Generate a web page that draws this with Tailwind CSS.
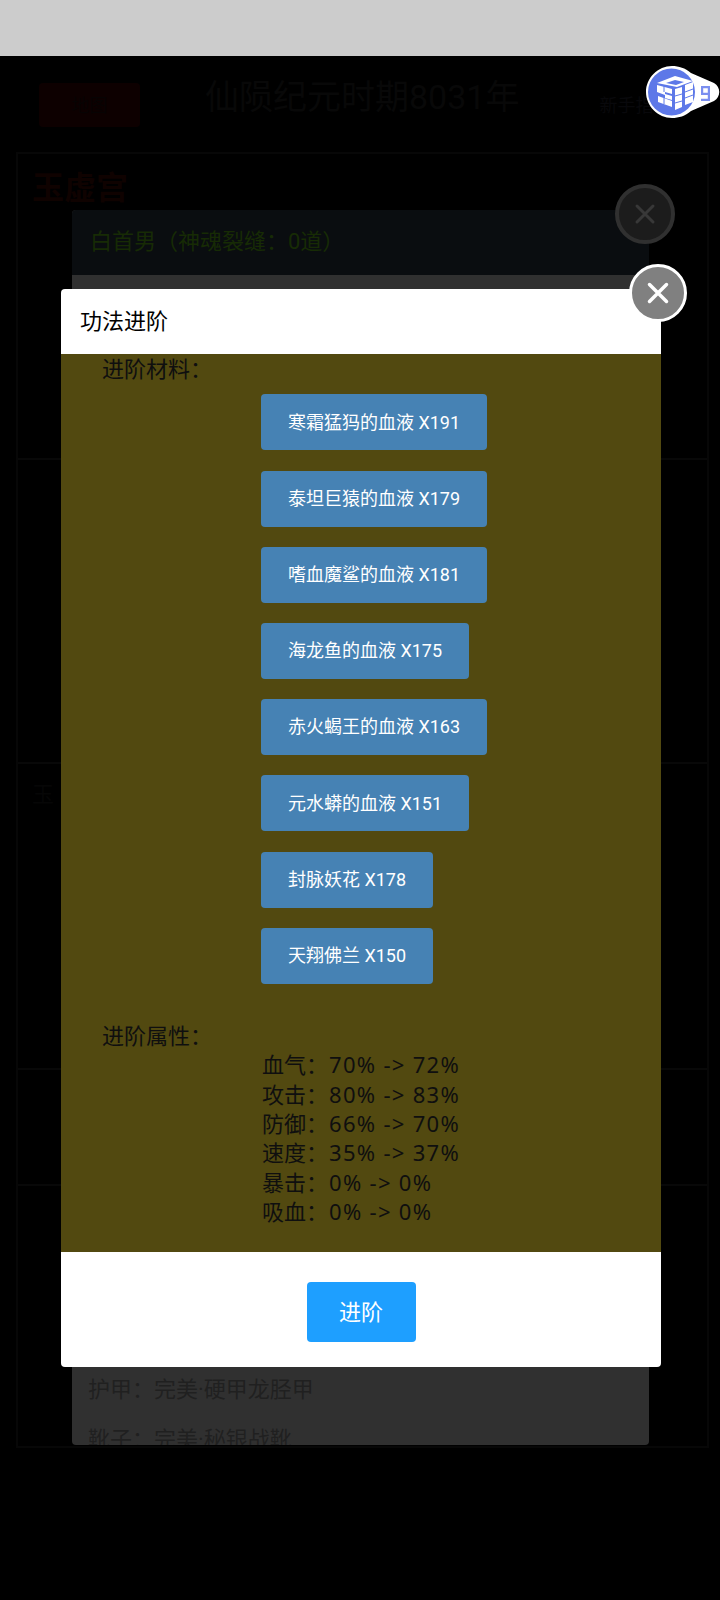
<!DOCTYPE html>
<html lang="zh-CN">
<head>
  <meta charset="UTF-8">
  <meta name="viewport" content="width=device-width, initial-scale=1.0">
  <title>功法进阶</title>
  <script src="https://cdn.jsdelivr.net/npm/@tailwindcss/browser@4"></script>
</head>
<body class="bg-black font-['Roboto','Noto_Sans_CJK_SC',sans-serif]">
  <div class="relative w-[720px] h-[1600px] overflow-hidden bg-black">
    <div class="h-[56px] bg-[#cccccc]"></div>

    <!-- page behind the dimmer -->
    <div class="flex h-[96px] items-start px-[39px]">
      <button class="mt-[27px] w-[101px] h-[44px] rounded-sm bg-[#0d0000] text-[18px] text-[#070303]">地图</button>
      <h1 class="ml-[65px] mt-[18px] text-[34px] leading-[46px] text-[#080808]">仙陨纪元时期8031年</h1>
      <span class="ml-[80px] mt-[38px] text-[18px] leading-[24px] text-[#08080b] whitespace-nowrap">新手指</span>
    </div>

    <div class="ml-[16px] w-[693px] flex flex-col border-2 border-[#070707] h-[1296px]">
      <div class="h-[306px] border-b-2 border-[#080808] px-[14px] pt-[12px]">
        <h2 class="text-[32px] leading-[44px] font-bold text-[#0f0200]">玉虚宫</h2>
      </div>
      <div class="h-[304px] border-b-2 border-[#080808]"></div>
      <div class="h-[306px] border-b-2 border-[#080808] px-[14px] pt-[14px]">
        <span class="text-[22px] text-[#060606]">玉</span>
      </div>
      <div class="h-[116px] border-b-2 border-[#080808]"></div>
      <div class="flex-1"></div>
    </div>

    <!-- first layer, dimmed -->
    <div class="absolute left-[72px] top-[210px] w-[577px] h-[1235px] rounded-sm overflow-hidden bg-[#303030]">
      <div class="h-[65px] bg-[#0a0d10] px-[18px] text-[22px] leading-[64px] text-[#172b05]">白首男（神魂裂缝：0道）</div>
      <div class="h-[1090px]"></div>
      <div class="px-[16px] text-[22px] leading-[30px] text-[#202020]">
        <p class="mt-[10px]">护甲：完美·硬甲龙胫甲</p>
        <p class="mt-[20px]">靴子：完美·秘银战靴</p>
      </div>
    </div>
    <button class="absolute left-[615px] top-[184px] w-[60px] h-[60px] rounded-full bg-[#1c1c1c] border-[4px] border-[#303030] flex items-center justify-center">
      <svg class="w-[30px] h-[30px]" viewBox="0 0 30 30"><path d="M7 7 23 23M23 7 7 23" stroke="#383838" stroke-width="3" stroke-linecap="round"/></svg>
    </button>

    <!-- current layer -->
    <div class="absolute left-[61px] top-[289px] w-[600px] h-[1078px] rounded-sm overflow-hidden bg-white flex flex-col">
      <div class="h-[65px] px-[19px] text-[22px] leading-[65px] text-black">功法进阶</div>
      <div class="h-[898px] bg-[#524910] pl-[41px] text-[22px] leading-[29.4px] text-[#0f0f0f]">
        <p class="pt-[1px]">进阶材料：</p>
        <div class="mt-[10px] ml-[159px] flex flex-col items-start gap-[20.2px]">
          <button class="h-[56px] px-[27px] rounded-[4px] bg-[#4682b4] text-[18px] text-white whitespace-nowrap">寒霜猛犸的血液 X191</button>
          <button class="h-[56px] px-[27px] rounded-[4px] bg-[#4682b4] text-[18px] text-white whitespace-nowrap">泰坦巨猿的血液 X179</button>
          <button class="h-[56px] px-[27px] rounded-[4px] bg-[#4682b4] text-[18px] text-white whitespace-nowrap">嗜血魔鲨的血液 X181</button>
          <button class="h-[56px] px-[27px] rounded-[4px] bg-[#4682b4] text-[18px] text-white whitespace-nowrap">海龙鱼的血液 X175</button>
          <button class="h-[56px] px-[27px] rounded-[4px] bg-[#4682b4] text-[18px] text-white whitespace-nowrap">赤火蝎王的血液 X163</button>
          <button class="h-[56px] px-[27px] rounded-[4px] bg-[#4682b4] text-[18px] text-white whitespace-nowrap">元水蟒的血液 X151</button>
          <button class="h-[56px] px-[27px] rounded-[4px] bg-[#4682b4] text-[18px] text-white whitespace-nowrap">封脉妖花 X178</button>
          <button class="h-[56px] px-[27px] rounded-[4px] bg-[#4682b4] text-[18px] text-white whitespace-nowrap">天翔佛兰 X150</button>
        </div>
        <p class="mt-[38px]">进阶属性：</p>
        <div class="ml-[160px] mt-[-1px] font-['Noto_Sans','Noto_Sans_CJK_SC',sans-serif]">
          <p>血气：<span class="ml-[1px] tracking-[1.3px]">70% -&gt; 72%</span></p>
          <p>攻击：<span class="ml-[1px] tracking-[1.3px]">80% -&gt; 83%</span></p>
          <p>防御：<span class="ml-[1px] tracking-[1.3px]">66% -&gt; 70%</span></p>
          <p>速度：<span class="ml-[1px] tracking-[1.3px]">35% -&gt; 37%</span></p>
          <p>暴击：<span class="ml-[1px] tracking-[1.3px]">0% -&gt; 0%</span></p>
          <p>吸血：<span class="ml-[1px] tracking-[1.3px]">0% -&gt; 0%</span></p>
        </div>
      </div>
      <div class="flex-1 flex justify-center pt-[30px]">
        <button class="w-[109px] h-[60px] rounded-[4px] bg-[#1e9fff] text-[22px] text-white">进阶</button>
      </div>
    </div>
    <button class="absolute left-[629px] top-[264px] w-[58px] h-[58px] rounded-full bg-[#808080] border-[3px] border-white flex items-center justify-center">
      <svg class="w-[30px] h-[30px]" viewBox="0 0 30 30"><path d="M6.5 6.5 23.5 23.5M23.5 6.5 6.5 23.5" stroke="#fff" stroke-width="3.5" stroke-linecap="round"/></svg>
    </button>

    <!-- floating badge -->
    <div class="absolute left-[646px] top-[65px]">
      <svg class="block w-[74px] h-[54px]" viewBox="0 0 74 54">
        <path d="M26 1C33 1 39 3 45 8L68 18C75 22 75 32 68 36L45 46C39 51 33 53 26 53C12 53 0 41 0 27S12 1 26 1Z" fill="#fff"/>
        <circle cx="25.5" cy="27" r="23.5" fill="#5d78e8"/>
        <path d="M11 18 29 11 47 16 31 22Z" fill="#fff"/>
        <path d="M20 18 29 15 38 17 30 20Z" fill="#5d78e8"/>
        <path d="M11 20 26 24V29L19 27V30L11 27ZM12 31 26 36V42L12 37ZM19 29 26 31V35L19 33ZM29 24 36 22V42L29 45ZM39 20 47 17V37L39 40Z" fill="#fff"/>
        <path d="M18 21 18 27M18 33 18 39M29 31 36 29M29 38 36 36M39 27 47 24M39 33 47 30" stroke="#5d78e8" stroke-width="1"/>
        <path d="M55 21H64V36H55V33.8H61.8V30H55ZM57.2 23.2V27.8H61.8V23.2Z" fill="#7b8ff0"/>
      </svg>
    </div>
  </div>
</body>
</html>
